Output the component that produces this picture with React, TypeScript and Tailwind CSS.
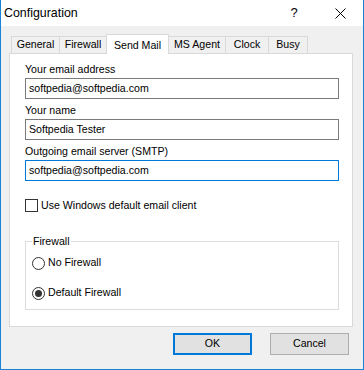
import React from 'react';

const tabs = [
  { name: 'General', w: 'w-[49px]' },
  { name: 'Firewall', w: 'w-[48px]' },
  { name: 'Send Mail', w: 'w-[63px]', active: true },
  { name: 'MS Agent', w: 'w-[58px]' },
  { name: 'Clock', w: 'w-[44px]' },
  { name: 'Busy', w: 'w-[40px]' },
];

function Field({ label, value, focused }: { label: string; value: string; focused?: boolean }) {
  return (
    <div className="flex flex-col">
      <div className="h-[14px] leading-[14px]">{label}</div>
      <div
        className={`mt-[2px] h-[21px] w-[314px] flex items-center pl-[3px] bg-white border ${
          focused ? 'border-[#0078d7]' : 'border-[#7a7a7a]'
        }`}
      >
        {value}
      </div>
    </div>
  );
}

function Radio({ label, checked }: { label: string; checked?: boolean }) {
  return (
    <div className="flex items-center h-[14px] gap-[3px]">
      <div className="w-[13px] h-[13px] rounded-full border border-[#333] bg-white flex items-center justify-center">
        {checked && <div className="w-[7px] h-[7px] rounded-full bg-[#333]" />}
      </div>
      <span>{label}</span>
    </div>
  );
}

export default function App() {
  return (
    <div
      className="w-[364px] h-[370px] flex flex-col border-x border-b border-[#1883d7] bg-[#f0f0f0] text-black text-[10.6px]"
      style={{ fontFamily: '"Liberation Sans", Arial, sans-serif' }}
    >
      <div className="h-[26px] bg-white flex items-center shrink-0">
        <span className="pl-[3px] text-[12.4px]">Configuration</span>
        <div className="ml-auto flex h-full">
          <div className="w-[46px] flex items-center justify-center text-[13px]">?</div>
          <div className="w-[46px] flex items-center justify-center">
            <svg width="11" height="11" viewBox="0 0 11 11">
              <path d="M0.5 0.5 L10.5 10.5 M10.5 0.5 L0.5 10.5" stroke="#000" strokeWidth="1" />
            </svg>
          </div>
        </div>
      </div>

      <div className="flex flex-col pt-[8px]">
        <div className="flex items-end h-[19px] pl-[10px]">
          {tabs.map((t, i) => (
            <div
              key={t.name}
              className={`${t.w} ${i > 0 ? '-ml-px' : ''} flex justify-center border-t border-x border-[#d9d9d9] ${
                t.active
                  ? 'h-[20px] -mb-px bg-white relative z-10 pt-[3px]'
                  : 'h-[17px] bg-[#f0f0f0] items-center'
              }`}
            >
              {t.name}
            </div>
          ))}
        </div>

        <div className="ml-[8px] w-[344px] h-[274px] bg-white border border-[#d9d9d9] pt-[8px] pl-[15px] flex flex-col">
          <Field label="Your email address" value="softpedia@softpedia.com" />
          <div className="mt-[4px]">
            <Field label="Your name" value="Softpedia Tester" />
          </div>
          <div className="mt-[4px]">
            <Field label="Outgoing email server (SMTP)" value="softpedia@softpedia.com" focused />
          </div>

          <div className="mt-[18px] flex items-center h-[13px] gap-[3px]">
            <div className="w-[13px] h-[13px] border border-[#333] bg-white" />
            <span>Use Windows default email client</span>
          </div>

          <fieldset className="mt-[22px] w-[314px] border border-[#dcdcdc] px-[7px] pb-[9px]">
            <legend className="px-[1px] leading-[14px] -ml-[1px]">Firewall</legend>
            <div className="mt-[8px] -ml-[1px]">
              <Radio label="No Firewall" />
            </div>
            <div className="mt-[16px] -ml-[1px]">
              <Radio label="Default Firewall" checked />
            </div>
          </fieldset>
        </div>

        <div className="flex justify-end gap-[18px] mt-[6px] pr-[14px]">
          <button className="w-[79px] h-[22px] bg-[#e1e1e1] border-2 border-[#0078d7]">OK</button>
          <button className="w-[79px] h-[22px] bg-[#e1e1e1] border border-[#adadad]">Cancel</button>
        </div>
      </div>
    </div>
  );
}
